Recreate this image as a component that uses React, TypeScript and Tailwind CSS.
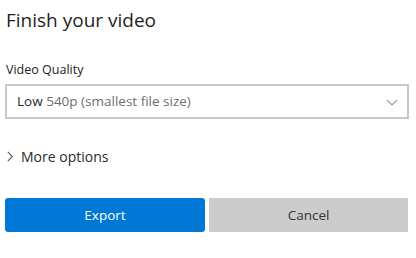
import React from 'react';

const App: React.FC = () => (
  <div
    className="w-[416px] h-[258px] bg-white text-[#1f1f1f] px-[5px] pt-[6px]"
    style={{ fontFamily: '"Open Sans", "Noto Sans", sans-serif' }}
  >
    {/* Title */}
    <h1 className="text-[19px] leading-[28px] ml-px">Finish your video</h1>

    {/* Quality select */}
    <div className="mt-[28px] text-[12.5px] leading-[16px] ml-px text-[#222]">Video Quality</div>
    <div className="mt-[6px] h-[35px] w-[404px] border-2 border-[#c8c8c8] flex items-center justify-between pl-[10px] pr-[8px]">
      <span className="text-[13.5px]">
        <span className="text-[#2a2a2a]">Low</span>{' '}
        <span className="text-[#6e6e6e]">540p (smallest file size)</span>
      </span>
      <svg width="12" height="7" viewBox="0 0 12 7" fill="none" className="mr-[1px] mt-[2px]">
        <path d="M1 1l5 5 5-5" stroke="#9a9a9a" strokeWidth="1.1" />
      </svg>
    </div>

    {/* More options */}
    <div className="mt-[27px] flex items-center gap-[8px] ml-[2px]">
      <svg width="6" height="11" viewBox="0 0 6 11" fill="none">
        <path d="M0.8 0.8l4.5 4.7-4.5 4.7" stroke="#555" strokeWidth="1.1" />
      </svg>
      <span className="text-[14px] text-[#2a2a2a]">More options</span>
    </div>

    {/* Actions */}
    <div className="mt-[31px] flex gap-[4px]">
      <button className="w-[200px] h-[34px] rounded-[3px] bg-[#0078d7] text-white text-[13.5px]">
        Export
      </button>
      <button className="w-[199px] h-[34px] bg-[#cccccc] text-[#333] text-[13.5px]">
        Cancel
      </button>
    </div>
  </div>
);

export default App;
